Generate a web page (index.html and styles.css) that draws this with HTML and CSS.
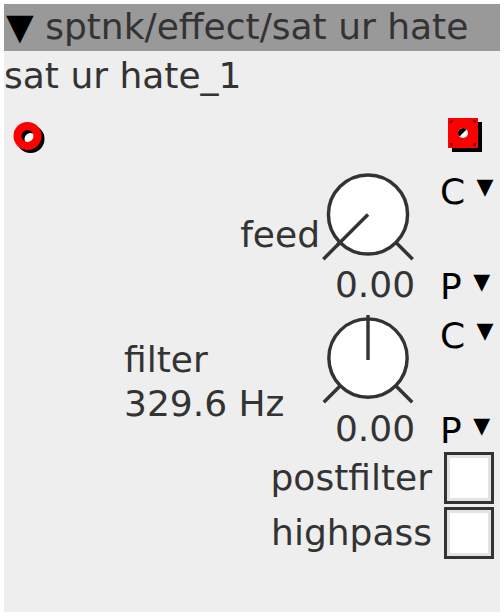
FILE: index.html
```html
<!DOCTYPE html>
<html>
<head>
<meta charset="utf-8">
<link rel="stylesheet" href="styles.css">
</head>
<body>
<div class="panel">
  <div class="header"><span class="tri">▼</span> sptnk/effect/sat ur hate</div>
  <div class="title">sat ur hate_1</div>
  <div class="ports">
    <svg class="port-in" width="40" height="40" viewBox="0 0 40 40">
      <circle cx="17.5" cy="20" r="6" fill="#fff"/>
      <circle cx="20.5" cy="23" r="10" fill="none" stroke="#000" stroke-width="8"/>
      <circle cx="17.5" cy="20" r="10" fill="none" stroke="#f00" stroke-width="8"/>
    </svg>
    <svg class="port-out" width="40" height="40" viewBox="0 0 40 40">
      <rect x="7" y="7" width="30" height="30" fill="#000"/>
      <rect x="3" y="3" width="30" height="30" fill="#f00"/>
      <path d="M6 8V6H8M28 6H30V8M30 28V30H28M8 30H6V28" fill="none" stroke="#000" stroke-width="1.2"/>
      <circle cx="18" cy="18" r="5" fill="#fff"/>
      <path d="M13 18a5 5 0 0 1 8.5-3.5L14.5 21.5A5 5 0 0 1 13 18z" fill="#000"/>
    </svg>
  </div>

  <div class="knob-block">
    <div class="label label-feed">feed</div>
    <div class="knob-col">
      <svg class="knob" width="96" height="94" viewBox="0 0 96 94">
        <circle cx="48" cy="45" r="40" fill="#fff" stroke="#333" stroke-width="3.5"/>
        <line x1="19.7" y1="73.3" x2="2.8" y2="90.2" stroke="#333" stroke-width="3.5"/>
        <line x1="76.3" y1="73.3" x2="93.2" y2="90.2" stroke="#333" stroke-width="3.5"/>
        <line x1="48" y1="45" x2="16.9" y2="76.1" stroke="#333" stroke-width="3.5"/>
      </svg>
      <div class="value">0.00</div>
    </div>
    <div class="side">
      <div class="sel sel-c">C <span class="arrow">▼</span></div>
      <div class="sel sel-p">P <span class="arrow">▼</span></div>
    </div>
  </div>

  <div class="knob-block second">
    <div class="label label-filter"><div>filter</div><div>329.6 Hz</div></div>
    <div class="knob-col">
      <svg class="knob" width="96" height="94" viewBox="0 0 96 94">
        <circle cx="48" cy="45" r="40" fill="#fff" stroke="#333" stroke-width="3.5"/>
        <line x1="19.7" y1="73.3" x2="2.8" y2="90.2" stroke="#333" stroke-width="3.5"/>
        <line x1="76.3" y1="73.3" x2="93.2" y2="90.2" stroke="#333" stroke-width="3.5"/>
        <line x1="48" y1="47" x2="48" y2="1" stroke="#333" stroke-width="3.5"/>
      </svg>
      <div class="value value-2">0.00</div>
    </div>
    <div class="side">
      <div class="sel sel-c">C <span class="arrow">▼</span></div>
      <div class="sel sel-p">P <span class="arrow">▼</span></div>
    </div>
  </div>

  <div class="check-row">
    <span class="check-label">postfilter</span>
    <span class="checkbox"></span>
  </div>
  <div class="check-row">
    <span class="check-label">highpass</span>
    <span class="checkbox"></span>
  </div>
</div>
</body>
</html>
```

FILE: styles.css
```css
html, body {
  margin: 0;
  padding: 0;
  background: #fff;
}
body {
  font-family: "DejaVu Sans", sans-serif;
  color: #333;
}
.panel {
  margin: 4px;
  width: 496px;
  height: 608px;
  background: #eee;
  display: flex;
  flex-direction: column;
  overflow: hidden;
}
.header {
  height: 47px;
  line-height: 46px;
  font-size: 36px;
  background: #999;
  padding-left: 2px;
  white-space: nowrap;
}
.tri {
  color: #000;
}
.title {
  margin-top: 5px;
  height: 40px;
  line-height: 40px;
  font-size: 36px;
  padding-left: 0;
}
.ports {
  height: 74px;
  display: flex;
  justify-content: space-between;
  align-items: flex-start;
  padding-top: 20px;
  box-sizing: border-box;
}
.port-in {
  margin-left: 6px;
}
.port-out {
  margin-right: 15px;
  margin-top: -1px;
}
.knob-block {
  display: flex;
  height: 135px;
}
.knob-block.second {
  margin-top: 9px;
}
.label {
  flex: 1;
  display: flex;
  flex-direction: column;
  align-items: flex-end;
  font-size: 36px;
  line-height: 40px;
}
.label-feed {
  padding-top: 45px;
  padding-right: 0;
}
.label-filter {
  padding-top: 24px;
  padding-right: 34px;
  line-height: 44px;
}
.label-filter div {
  width: 162px;
}
.knob-col {
  width: 96px;
  display: flex;
  flex-direction: column;
  align-items: center;
}
.knob {
  display: block;
}
.value {
  font-size: 36px;
  line-height: 40px;
  padding-left: 14px;
  margin-top: 2px;
}
.value-2 {
  margin-top: 3px;
}
.side {
  width: 84px;
  display: flex;
  flex-direction: column;
  justify-content: space-between;
  padding-left: 24px;
  box-sizing: border-box;
}
.sel {
  font-size: 36px;
  line-height: 40px;
  color: #000;
  white-space: nowrap;
}
.sel-c {
  margin-top: -3px;
}
.sel-p {
  margin-bottom: -2px;
}
.arrow {
  font-size: 22px;
  vertical-align: 10px;
}
.check-row {
  height: 55px;
  display: flex;
  align-items: center;
  justify-content: flex-end;
  padding-right: 6px;
}
.knob-block.second + .check-row {
  margin-top: 1px;
}
.check-label {
  font-size: 36px;
  line-height: 40px;
  margin-right: 12px;
}
.checkbox {
  width: 44px;
  height: 46px;
  border: 3px solid #333;
  background: #fff;
  box-shadow: inset 0 0 0 3px #e4e4e4;
}
```
